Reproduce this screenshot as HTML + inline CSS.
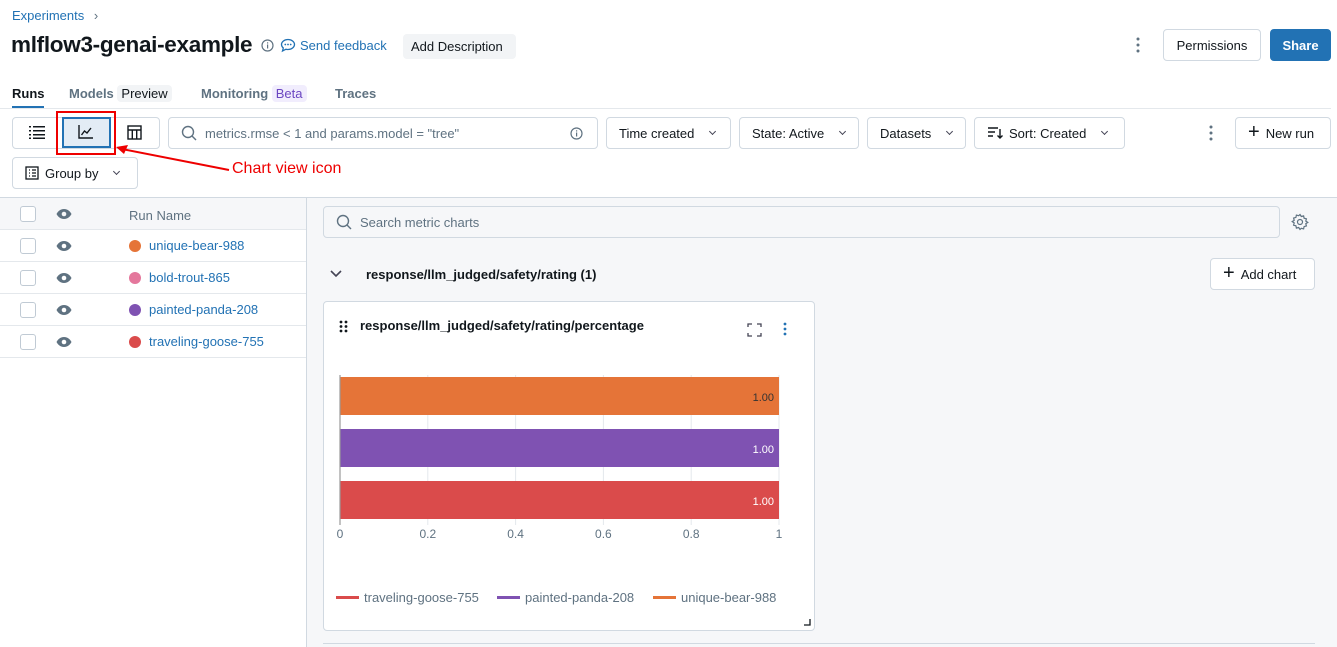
<!DOCTYPE html>
<html><head><meta charset="utf-8"><style>
*{box-sizing:border-box;margin:0;padding:0}
body{width:1337px;height:647px;overflow:hidden;background:#fff;font-family:"Liberation Sans",sans-serif;color:#11171c;font-size:13px;position:relative}
.a{position:absolute}
.btn{position:absolute;border:1px solid #d1d9e1;border-radius:4px;background:#fff;height:32px;display:flex;align-items:center;padding:0 12px;font-size:13px;color:#11171c;gap:6px}
.chev{display:inline-block;width:5px;height:5px;border-right:1.2px solid #445;border-bottom:1.2px solid #445;transform:rotate(45deg);margin:-3px 0 0 10px}
.link{color:#2272b4}
.row{position:absolute;left:0;width:306px;height:32px;border-bottom:1px solid #e4e8ec}
.cb{position:absolute;left:20px;top:8px;width:16px;height:16px;border:1px solid #c0cad4;border-radius:3px;background:#fff}
.eye{position:absolute;left:56px;top:10px}
.dot{position:absolute;left:129px;top:10px;width:12px;height:12px;border-radius:50%}
.rn{position:absolute;left:149px;top:8px;color:#2272b4;font-size:13px}
</style></head><body>
<div class="a link" style="left:12px;top:8px;font-size:13px">Experiments <span style="color:#5f7281;margin-left:6px">›</span></div>
<div class="a" style="left:11px;top:32px;font-size:22.5px;font-weight:bold;letter-spacing:-0.3px">mlflow3-genai-example</div>
<svg class="a" style="left:261px;top:39px" width="13" height="13" viewBox="0 0 13 13"><circle cx="6.5" cy="6.5" r="5.5" fill="none" stroke="#5f7281" stroke-width="1.2"/><rect x="6" y="5.5" width="1.2" height="4" fill="#5f7281"/><rect x="6" y="3.3" width="1.2" height="1.2" fill="#5f7281"/></svg>
<svg class="a" style="left:280px;top:38px" width="16" height="15" viewBox="0 0 16 15"><path d="M8 1.5c3.6 0 6.5 2.3 6.5 5s-2.9 5-6.5 5c-.7 0-1.4-.1-2-.3L2.5 13l.8-3C2.2 9.1 1.5 7.9 1.5 6.5c0-2.7 2.9-5 6.5-5z" fill="none" stroke="#2272b4" stroke-width="1.3"/><circle cx="5.3" cy="6.5" r=".9" fill="#2272b4"/><circle cx="8" cy="6.5" r=".9" fill="#2272b4"/><circle cx="10.7" cy="6.5" r=".9" fill="#2272b4"/></svg>
<div class="a link" style="left:300px;top:38px;font-size:13px">Send feedback</div>
<div class="a" style="left:403px;top:34px;width:113px;height:25px;background:#f2f4f6;border-radius:4px;font-size:13px;padding:5px 8px">Add Description</div>
<svg class="a" style="left:1136px;top:37px" width="4" height="16"><circle cx="2" cy="2" r="1.5" fill="#5f7281"/><circle cx="2" cy="8" r="1.5" fill="#5f7281"/><circle cx="2" cy="14" r="1.5" fill="#5f7281"/></svg>
<div class="btn" style="left:1163px;top:29px;width:98px;justify-content:center">Permissions</div>
<div class="btn" style="left:1270px;top:29px;width:61px;justify-content:center;background:#2272b4;border-color:#2272b4;color:#fff;font-weight:bold">Share</div>

<div class="a" style="left:12px;top:86px;font-weight:bold;font-size:13px">Runs</div>
<div class="a" style="left:12px;top:106px;width:32px;height:3px;background:#2272b4"></div>
<div class="a" style="left:69px;top:86px;color:#5f7281;font-weight:bold">Models <span style="background:#f2f4f6;color:#11171c;font-weight:normal;border-radius:4px;padding:1px 4px">Preview</span></div>
<div class="a" style="left:201px;top:86px;color:#5f7281;font-weight:bold">Monitoring <span style="background:#f1edfd;color:#6b46c1;font-weight:normal;border-radius:4px;padding:1px 4px">Beta</span></div>
<div class="a" style="left:335px;top:86px;color:#5f7281;font-weight:bold">Traces</div>
<div class="a" style="left:0;top:108px;width:1331px;height:1px;background:#e4e8ec"></div>

<div class="a" style="left:12px;top:117px;width:148px;height:32px;border:1px solid #d1d9e1;border-radius:4px"></div>
<svg class="a" style="left:29px;top:125px" width="16" height="14"><g fill="#11171c"><rect x="0" y="1" width="2" height="1.5"/><rect x="4" y="1" width="12" height="1.5"/><rect x="0" y="5" width="2" height="1.5"/><rect x="4" y="5" width="12" height="1.5"/><rect x="0" y="9" width="2" height="1.5"/><rect x="4" y="9" width="12" height="1.5"/><rect x="0" y="12.5" width="2" height="1.5"/><rect x="4" y="12.5" width="12" height="1.5"/></g></svg>
<div class="a" style="left:62px;top:117px;width:49px;height:31px;background:#e3ecf5;border:2px solid #2272b4"></div>
<svg class="a" style="left:78px;top:125px" width="16" height="14"><path d="M1 0v13h14" fill="none" stroke="#11171c" stroke-width="1.4"/><path d="M3.5 10l3-4 2.5 2 4-5" fill="none" stroke="#11171c" stroke-width="1.4"/></svg>
<div class="a" style="left:56px;top:111px;width:60px;height:44px;border:2px solid #e00"></div>
<svg class="a" style="left:127px;top:125px" width="15" height="15"><rect x="1" y="1" width="13" height="13" fill="none" stroke="#11171c" stroke-width="1.4"/><path d="M1 5h13M5.3 5v9M9.7 5v9" stroke="#11171c" stroke-width="1.4"/></svg>
<svg class="a" style="left:116px;top:142px" width="116" height="32"><path d="M113 28L6 7" stroke="#e00" stroke-width="2"/><path d="M0 5l12-2-4 9z" fill="#e00"/></svg>
<div class="a" style="left:232px;top:160px;color:#e00;font-size:16px">Chart view icon</div>

<div class="btn" style="left:168px;top:117px;width:430px">
<svg width="16" height="16"><circle cx="7" cy="7" r="5.5" fill="none" stroke="#5f7281" stroke-width="1.4"/><path d="M11 11l4 4" stroke="#5f7281" stroke-width="1.4"/></svg>
<span style="color:#5f7281;margin-left:2px">metrics.rmse &lt; 1 and params.model = "tree"</span>
<svg style="position:absolute;right:14px;top:9px" width="13" height="13"><circle cx="6.5" cy="6.5" r="5.5" fill="none" stroke="#5f7281" stroke-width="1.2"/><rect x="6" y="5.5" width="1.2" height="4" fill="#5f7281"/><rect x="6" y="3.3" width="1.2" height="1.2" fill="#5f7281"/></svg></div>
<div class="btn" style="left:606px;top:117px;width:125px">Time created<span class="chev"></span></div>
<div class="btn" style="left:739px;top:117px;width:120px">State: Active<span class="chev"></span></div>
<div class="btn" style="left:867px;top:117px;width:99px">Datasets<span class="chev"></span></div>
<div class="btn" style="left:974px;top:117px;width:151px"><svg width="16" height="14"><path d="M1 2h10M1 6h7M1 10h5" stroke="#11171c" stroke-width="1.4"/><path d="M13 3v9M10.5 9.5L13 12l2.5-2.5" fill="none" stroke="#11171c" stroke-width="1.4"/></svg>Sort: Created<span class="chev"></span></div>
<svg class="a" style="left:1209px;top:125px" width="4" height="16"><circle cx="2" cy="2" r="1.5" fill="#5f7281"/><circle cx="2" cy="8" r="1.5" fill="#5f7281"/><circle cx="2" cy="14" r="1.5" fill="#5f7281"/></svg>
<div class="btn" style="left:1235px;top:117px;width:96px"><span style="font-size:20px;line-height:1;margin-top:-2px">+</span>New run</div>
<div class="btn" style="left:12px;top:157px;width:126px"><svg width="14" height="14"><rect x="1" y="1" width="12" height="12" fill="none" stroke="#11171c" stroke-width="1.3"/><path d="M4 4h1M4 7h1M4 10h1M7 4h4M7 7h4M7 10h4" stroke="#11171c" stroke-width="1.3"/></svg>Group by<span class="chev"></span></div>

<div class="a" style="left:0;top:197px;width:1337px;height:1px;background:#d1d9e1"></div>
<div class="a" style="left:306px;top:198px;width:1px;height:449px;background:#d1d9e1"></div>
<div class="a" style="left:307px;top:198px;width:1030px;height:449px;background:#f6f7f9"></div>

<div class="row" style="top:198px;background:#f6f7f9"><div class="cb"></div><svg class="eye" width="16" height="12"><path d="M8 1C4 1 1.5 4 .5 6c1 2 3.5 5 7.5 5s6.5-3 7.5-5C14.5 4 12 1 8 1z" fill="#5f7281"/><circle cx="8" cy="6" r="2.3" fill="#f6f7f9"/></svg><div class="a" style="left:129px;top:10px;color:#5f7281">Run Name</div></div>
<div class="row" style="top:230px"><div class="cb"></div><svg class="eye" width="16" height="12"><path d="M8 1C4 1 1.5 4 .5 6c1 2 3.5 5 7.5 5s6.5-3 7.5-5C14.5 4 12 1 8 1z" fill="#5f7281"/><circle cx="8" cy="6" r="2.3" fill="#fff"/></svg><div class="dot" style="background:#e57438"></div><div class="rn">unique-bear-988</div></div>
<div class="row" style="top:262px"><div class="cb"></div><svg class="eye" width="16" height="12"><path d="M8 1C4 1 1.5 4 .5 6c1 2 3.5 5 7.5 5s6.5-3 7.5-5C14.5 4 12 1 8 1z" fill="#5f7281"/><circle cx="8" cy="6" r="2.3" fill="#fff"/></svg><div class="dot" style="background:#e4779c"></div><div class="rn">bold-trout-865</div></div>
<div class="row" style="top:294px"><div class="cb"></div><svg class="eye" width="16" height="12"><path d="M8 1C4 1 1.5 4 .5 6c1 2 3.5 5 7.5 5s6.5-3 7.5-5C14.5 4 12 1 8 1z" fill="#5f7281"/><circle cx="8" cy="6" r="2.3" fill="#fff"/></svg><div class="dot" style="background:#7f52b2"></div><div class="rn">painted-panda-208</div></div>
<div class="row" style="top:326px"><div class="cb"></div><svg class="eye" width="16" height="12"><path d="M8 1C4 1 1.5 4 .5 6c1 2 3.5 5 7.5 5s6.5-3 7.5-5C14.5 4 12 1 8 1z" fill="#5f7281"/><circle cx="8" cy="6" r="2.3" fill="#fff"/></svg><div class="dot" style="background:#da4b4b"></div><div class="rn">traveling-goose-755</div></div>

<div class="btn" style="left:323px;top:206px;width:957px;background:#f6f7f9"><svg width="16" height="16"><circle cx="7" cy="7" r="5.5" fill="none" stroke="#5f7281" stroke-width="1.4"/><path d="M11 11l4 4" stroke="#5f7281" stroke-width="1.4"/></svg><span style="color:#5f7281;margin-left:2px">Search metric charts</span></div>
<svg class="a" style="left:1291px;top:213px" width="18" height="18" viewBox="0 0 18 18"><path d="M9 1.5l1.3 2 2.3-.6.5 2.3 2.3.6-.6 2.3 2 1.3-2 1.3.6 2.3-2.3.6-.5 2.3-2.3-.6L9 16.5l-1.3-2-2.3.6-.5-2.3-2.3-.6.6-2.3-2-1.3 2-1.3-.6-2.3 2.3-.6.5-2.3 2.3.6z" fill="none" stroke="#5f7281" stroke-width="1.2"/><circle cx="9" cy="9" r="2.5" fill="none" stroke="#5f7281" stroke-width="1.2"/></svg>
<svg class="a" style="left:330px;top:270px" width="12" height="8"><path d="M1 1l5 5 5-5" fill="none" stroke="#445" stroke-width="1.6"/></svg>
<div class="a" style="left:366px;top:267px;font-weight:bold">response/llm_judged/safety/rating (1)</div>
<div class="btn" style="left:1210px;top:258px;width:105px"><span style="font-size:20px;line-height:1;margin-top:-2px">+</span>Add chart</div>

<div class="a" style="left:323px;top:301px;width:492px;height:330px;background:#fff;border:1px solid #d1d9e1;border-radius:4px"></div>
<svg class="a" style="left:339px;top:320px" width="9" height="13"><g fill="#11171c"><circle cx="2" cy="2" r="1.4"/><circle cx="7" cy="2" r="1.4"/><circle cx="2" cy="6.5" r="1.4"/><circle cx="7" cy="6.5" r="1.4"/><circle cx="2" cy="11" r="1.4"/><circle cx="7" cy="11" r="1.4"/></g></svg>
<div class="a" style="left:360px;top:318px;font-weight:bold">response/llm_judged/safety/rating/percentage</div>
<svg class="a" style="left:747px;top:323px" width="15" height="14"><path d="M1 4V1h4M10 1h4v3M14 10v3h-4M5 13H1v-3" fill="none" stroke="#445" stroke-width="1.3"/></svg>
<svg class="a" style="left:783px;top:322px" width="4" height="14"><circle cx="2" cy="2" r="1.4" fill="#2272b4"/><circle cx="2" cy="7" r="1.4" fill="#2272b4"/><circle cx="2" cy="12" r="1.4" fill="#2272b4"/></svg>

<svg class="a" style="left:330px;top:365px" width="470" height="185" font-family="Liberation Sans" font-size="11">
<g stroke="#e4e8ec"><line x1="97.8" y1="10" x2="97.8" y2="160"/><line x1="185.6" y1="10" x2="185.6" y2="160"/><line x1="273.4" y1="10" x2="273.4" y2="160"/><line x1="361.2" y1="10" x2="361.2" y2="160"/><line x1="449" y1="10" x2="449" y2="160"/></g>
<rect x="10" y="12" width="439" height="38" fill="#e57438"/>
<rect x="10" y="64" width="439" height="38" fill="#7f52b2"/>
<rect x="10" y="116" width="439" height="38" fill="#da4b4b"/>
<line x1="10" y1="10" x2="10" y2="160" stroke="#999" stroke-width="1.2"/>
<text x="444" y="36" text-anchor="end" fill="#333">1.00</text>
<text x="444" y="88" text-anchor="end" fill="#fff">1.00</text>
<text x="444" y="140" text-anchor="end" fill="#fff">1.00</text>
<g fill="#5f7281" text-anchor="middle" font-size="12"><text x="10" y="173">0</text><text x="97.8" y="173">0.2</text><text x="185.6" y="173">0.4</text><text x="273.4" y="173">0.6</text><text x="361.2" y="173">0.8</text><text x="449" y="173">1</text></g>
</svg>
<svg class="a" style="left:330px;top:588px" width="470" height="20" font-family="Liberation Sans" font-size="13" fill="#5f7281">
<rect x="6" y="8" width="23" height="3" fill="#da4b4b"/><text x="34" y="14">traveling-goose-755</text>
<rect x="167" y="8" width="23" height="3" fill="#7f52b2"/><text x="195" y="14">painted-panda-208</text>
<rect x="323" y="8" width="23" height="3" fill="#e57438"/><text x="351" y="14">unique-bear-988</text>
</svg>
<svg class="a" style="left:803px;top:619px" width="8" height="8"><path d="M1 6h6V0" fill="none" stroke="#11171c" stroke-width="1.3"/></svg>
<div class="a" style="left:323px;top:643px;width:992px;height:1px;background:#d1d9e1"></div>
</body></html>
